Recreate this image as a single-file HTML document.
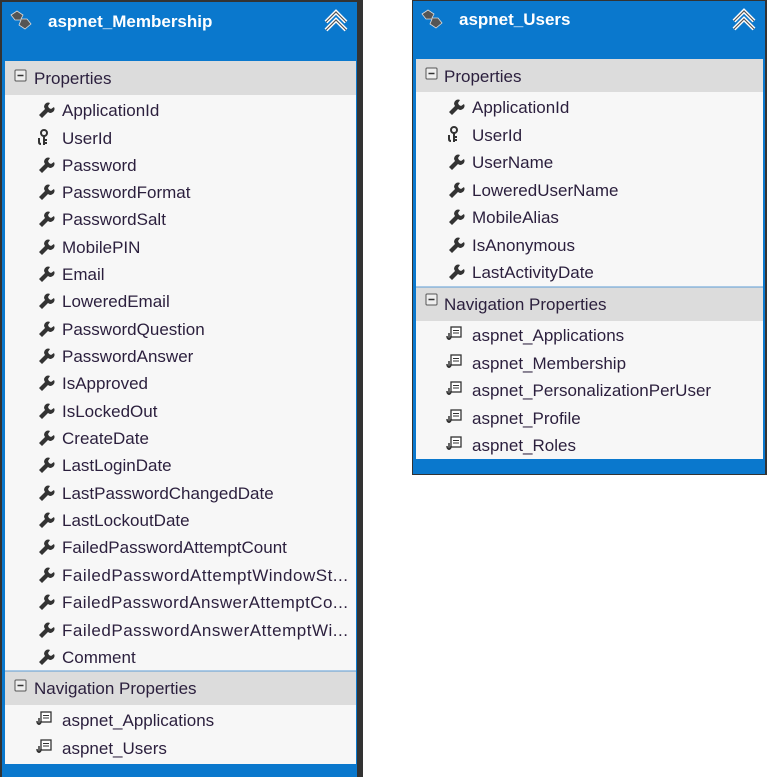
<!DOCTYPE html>
<html><head><meta charset="utf-8"><style>
html,body{margin:0;padding:0;background:#fff;width:768px;height:777px;overflow:hidden}
svg text{font-family:"Liberation Sans",sans-serif}
</style></head><body>
<svg width="768" height="777" viewBox="0 0 768 777" xmlns="http://www.w3.org/2000/svg">
<defs>
<g id="wr"><path d="M0 11 L6 5 A4 4 0 0 1 11 -1 L9 2 L10 4 L12 5 L15 3 A4 4 0 0 1 9 8 L3 14 Z" fill="#333"/></g>
<g id="key"><circle cx="7" cy="2" r="3" fill="none" stroke="#333" stroke-width="2"/><path d="M7 5 V14 M7 9 H10 M7 12 H10 M2 7 V11 Q2 13 4 13" stroke="#333" stroke-width="2" fill="none"/></g>
<g id="nav"><rect x="5" y="-1" width="10" height="10" fill="#fff" stroke="#333" stroke-width="1.3"/><path d="M7 2.5 H13 M7 5 H13" stroke="#333" stroke-width="1"/><path d="M3 5 V12 M1 8 Q1 11 3 11 Q5 11 5 8" stroke="#333" stroke-width="1.5" fill="none"/></g>
<g id="ent"><path d="M0 4 L6 0 L12 4 L10 8 L16 8 L20 13 L14 18 L8 14 L10 9 L4 9 Z" fill="#555" stroke="#ddd" stroke-width="0.8"/></g>
<g id="chev"><path d="M0 10 L10 0 L20 10 M0 18 L10 8 L20 18" stroke="#fff" stroke-width="4" fill="none"/><path d="M0 10 L10 0 L20 10 M0 18 L10 8 L20 18" stroke="#555" stroke-width="1.2" fill="none"/></g>
</defs>

<!-- LEFT BOX -->
<rect x="0" y="0" width="363" height="777" fill="#333"/>
<rect x="2" y="2" width="355" height="775" fill="#0a78cd"/>
<rect x="5" y="61" width="351" height="703" fill="#f7f7f7"/>
<rect x="5" y="61" width="351" height="34" fill="#dcdcdc"/>
<rect x="5" y="671" width="351" height="34" fill="#dcdcdc"/>
<line x1="5" y1="671" x2="356" y2="671" stroke="#5b9bd5" stroke-width="1"/>
<use href="#ent" x="11" y="11"/>
<text x="48" y="27" font-size="17" font-weight="bold" fill="#fff">aspnet_Membership</text>
<use href="#chev" x="326" y="12"/>
<rect x="15" y="70" width="11" height="11" fill="#eee" stroke="#555" rx="1"/><path d="M17.5 75.5 H23.5" stroke="#333" stroke-width="1.5"/>
<text x="34" y="84" font-size="17" fill="#2b1f3d">Properties</text>
<rect x="15" y="680" width="11" height="11" fill="#eee" stroke="#555" rx="1"/><path d="M17.5 685.5 H23.5" stroke="#333" stroke-width="1.5"/>
<text x="34" y="694" font-size="17" fill="#2b1f3d">Navigation Properties</text>
<g font-size="17" fill="#2b1f3d">
<use href="#wr" x="39" y="104"/><text x="62" y="116">ApplicationId</text>
<use href="#key" x="37" y="131"/><text x="62" y="144">UserId</text>
<use href="#wr" x="39" y="159"/><text x="62" y="171">Password</text>
<use href="#wr" x="39" y="186"/><text x="62" y="198">PasswordFormat</text>
<use href="#wr" x="39" y="213"/><text x="62" y="225">PasswordSalt</text>
<use href="#wr" x="39" y="241"/><text x="62" y="253">MobilePIN</text>
<use href="#wr" x="39" y="268"/><text x="62" y="280">Email</text>
<use href="#wr" x="39" y="295"/><text x="62" y="307">LoweredEmail</text>
<use href="#wr" x="39" y="323"/><text x="62" y="335">PasswordQuestion</text>
<use href="#wr" x="39" y="350"/><text x="62" y="362">PasswordAnswer</text>
<use href="#wr" x="39" y="377"/><text x="62" y="389">IsApproved</text>
<use href="#wr" x="39" y="405"/><text x="62" y="417">IsLockedOut</text>
<use href="#wr" x="39" y="432"/><text x="62" y="444">CreateDate</text>
<use href="#wr" x="39" y="459"/><text x="62" y="471">LastLoginDate</text>
<use href="#wr" x="39" y="487"/><text x="62" y="499">LastPasswordChangedDate</text>
<use href="#wr" x="39" y="514"/><text x="62" y="526">LastLockoutDate</text>
<use href="#wr" x="39" y="541"/><text x="62" y="553">FailedPasswordAttemptCount</text>
<use href="#wr" x="39" y="569"/><text x="62" y="581" textLength="286" lengthAdjust="spacing">FailedPasswordAttemptWindowSt...</text>
<use href="#wr" x="39" y="596"/><text x="62" y="608" textLength="286" lengthAdjust="spacing">FailedPasswordAnswerAttemptCo...</text>
<use href="#wr" x="39" y="624"/><text x="62" y="636" textLength="286" lengthAdjust="spacing">FailedPasswordAnswerAttemptWi...</text>
<use href="#wr" x="39" y="651"/><text x="62" y="663">Comment</text>
<use href="#nav" x="36" y="713"/><text x="62" y="726">aspnet_Applications</text>
<use href="#nav" x="36" y="741"/><text x="62" y="754">aspnet_Users</text>
</g>

<!-- RIGHT BOX -->
<rect x="412" y="0" width="355" height="475" fill="#333"/>
<rect x="413" y="1" width="352" height="473" fill="#0a78cd"/>
<rect x="416" y="59" width="347" height="400" fill="#f7f7f7"/>
<rect x="416" y="59" width="347" height="33" fill="#dcdcdc"/>
<rect x="416" y="287" width="347" height="34" fill="#dcdcdc"/>
<line x1="416" y1="287" x2="763" y2="287" stroke="#5b9bd5" stroke-width="1"/>
<use href="#ent" x="422" y="10"/>
<text x="459" y="25" font-size="17" font-weight="bold" fill="#fff">aspnet_Users</text>
<use href="#chev" x="734" y="11"/>
<rect x="426" y="68" width="11" height="11" fill="#eee" stroke="#555" rx="1"/><path d="M428.5 73.5 H434.5" stroke="#333" stroke-width="1.5"/>
<text x="444" y="82" font-size="17" fill="#2b1f3d">Properties</text>
<rect x="426" y="294" width="11" height="11" fill="#eee" stroke="#555" rx="1"/><path d="M428.5 299.5 H434.5" stroke="#333" stroke-width="1.5"/>
<text x="444" y="310" font-size="17" fill="#2b1f3d">Navigation Properties</text>
<g font-size="17" fill="#2b1f3d">
<use href="#wr" x="449" y="101"/><text x="472" y="113">ApplicationId</text>
<use href="#key" x="447" y="128"/><text x="472" y="141">UserId</text>
<use href="#wr" x="449" y="156"/><text x="472" y="168">UserName</text>
<use href="#wr" x="449" y="184"/><text x="472" y="196">LoweredUserName</text>
<use href="#wr" x="449" y="211"/><text x="472" y="223">MobileAlias</text>
<use href="#wr" x="449" y="239"/><text x="472" y="251">IsAnonymous</text>
<use href="#wr" x="449" y="266"/><text x="472" y="278">LastActivityDate</text>
<use href="#nav" x="446" y="328"/><text x="472" y="341">aspnet_Applications</text>
<use href="#nav" x="446" y="356"/><text x="472" y="369">aspnet_Membership</text>
<use href="#nav" x="446" y="383"/><text x="472" y="396">aspnet_PersonalizationPerUser</text>
<use href="#nav" x="446" y="411"/><text x="472" y="424">aspnet_Profile</text>
<use href="#nav" x="446" y="438"/><text x="472" y="451">aspnet_Roles</text>
</g>
</svg>
</body></html>
